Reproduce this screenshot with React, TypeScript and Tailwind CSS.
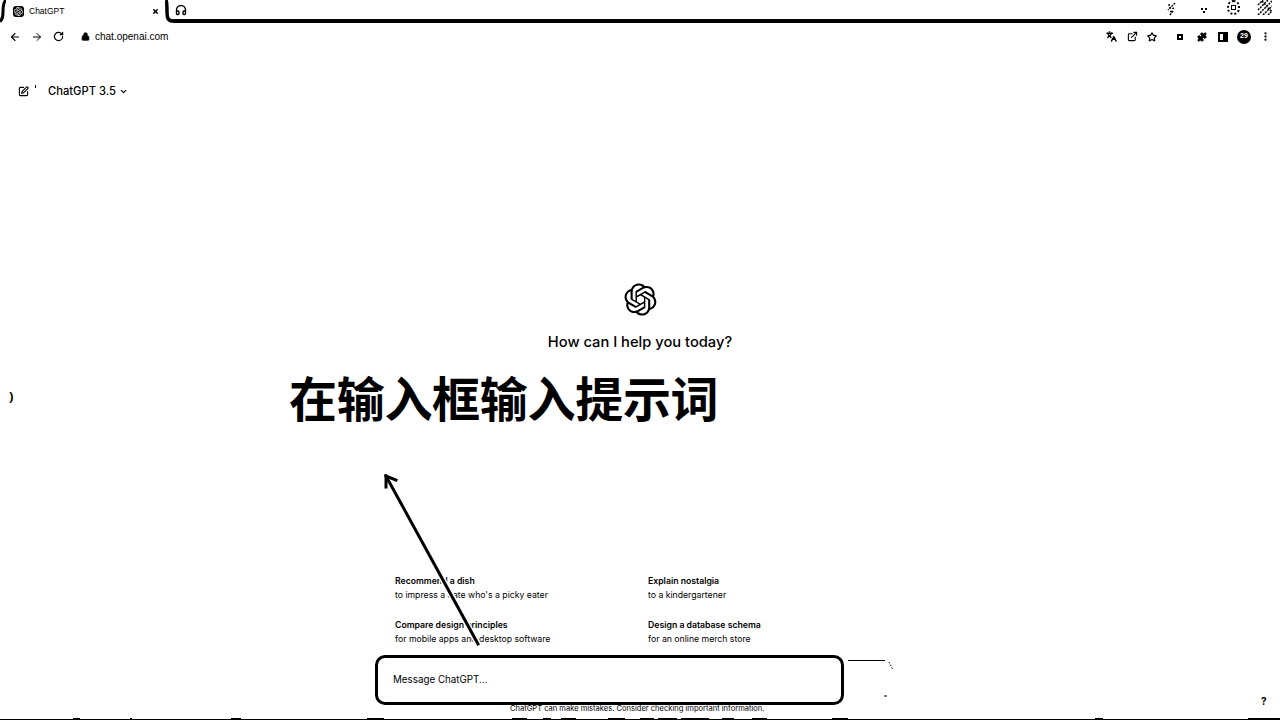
import {
  ArrowLeft,
  ArrowRight,
  ChevronDown,
  EllipsisVertical,
  ExternalLink,
  Headphones,
  Languages,
  Lock,
  Puzzle,
  RotateCw,
  SquarePen,
  Star,
  X,
} from "lucide-react";

const logoPath =
  "M37.5324 16.8707C37.9808 15.5241 38.1363 14.0974 37.9886 12.6859C37.8409 11.2744 37.3934 9.91076 36.676 8.68622C35.6126 6.83404 33.9882 5.3676 32.0373 4.4985C30.0864 3.62941 27.9098 3.40259 25.8215 3.85078C24.8796 2.7893 23.7219 1.94125 22.4257 1.36341C21.1295 0.785575 19.7249 0.491269 18.3058 0.500197C16.1708 0.495044 14.0893 1.16803 12.3614 2.42214C10.6335 3.67624 9.34853 5.44666 8.6917 7.47815C7.30085 7.76286 5.98686 8.3414 4.8377 9.17505C3.68854 10.0087 2.73073 11.0782 2.02839 12.312C0.956464 14.1591 0.498905 16.2988 0.721698 18.4228C0.944492 20.5467 1.83612 22.5449 3.268 24.1293C2.81966 25.4759 2.66413 26.9026 2.81182 28.3141C2.95951 29.7256 3.40701 31.0892 4.12437 32.3138C5.18791 34.1659 6.8123 35.6322 8.76321 36.5013C10.7141 37.3704 12.8907 37.5973 14.9789 37.1492C15.9208 38.2107 17.0786 39.0587 18.3747 39.6366C19.6709 40.2144 21.0755 40.5087 22.4946 40.4998C24.6307 40.5054 26.7133 39.8321 28.4418 38.5772C30.1704 37.3223 31.4556 35.5506 32.1119 33.5179C33.5027 33.2332 34.8167 32.6547 35.9659 31.821C37.115 30.9874 38.0728 29.9178 38.7752 28.684C39.8458 26.8371 40.3023 24.6979 40.0789 22.5748C39.8556 20.4517 38.9639 18.4544 37.5324 16.8707ZM22.4978 37.8849C20.7443 37.8874 19.0459 37.2733 17.6994 36.1501C17.7601 36.117 17.8666 36.0586 17.936 36.0161L25.9004 31.4156C26.1003 31.3019 26.2663 31.137 26.3813 30.9378C26.4964 30.7386 26.5563 30.5124 26.5549 30.2825V19.0542L29.9213 20.998C29.9389 21.0068 29.9541 21.0198 29.9656 21.0359C29.977 21.052 29.9842 21.0707 29.9867 21.0902V30.3889C29.9842 32.375 29.1946 34.2791 27.7909 35.6841C26.3872 37.0892 24.4838 37.8806 22.4978 37.8849ZM6.39227 30.9703C5.51397 29.4538 5.19742 27.6755 5.49804 25.9489C5.55718 25.9844 5.66048 26.0474 5.73461 26.0901L13.699 30.6906C13.8975 30.8068 14.1233 30.8681 14.3532 30.8681C14.583 30.8681 14.8088 30.8068 15.0073 30.6906L24.731 25.0754V28.9631C24.7321 28.9831 24.7283 29.0029 24.7199 29.0211C24.7115 29.0392 24.6988 29.055 24.6829 29.0671L16.6317 33.7156C14.9096 34.7076 12.8643 34.9756 10.9447 34.4609C9.02506 33.9461 7.38785 32.6905 6.39227 30.9703ZM4.29707 13.6194C5.17156 12.0998 6.55279 10.9364 8.19885 10.3327C8.19885 10.4013 8.19491 10.5228 8.19491 10.6071V19.808C8.19351 20.0378 8.25334 20.2638 8.36823 20.4629C8.48312 20.6619 8.64893 20.8267 8.84863 20.9404L18.5723 26.5542L15.206 28.4979C15.1894 28.5089 15.1703 28.5155 15.1505 28.5173C15.1307 28.5191 15.1107 28.516 15.0924 28.5082L7.04046 23.8557C5.32135 22.8601 4.06716 21.2235 3.55289 19.3046C3.03862 17.3858 3.30624 15.3413 4.29707 13.6194ZM31.955 20.0556L22.2312 14.4411L25.5976 12.4981C25.6142 12.4872 25.6333 12.4805 25.6531 12.4787C25.6729 12.4769 25.6928 12.4801 25.7111 12.4879L33.7631 17.1364C34.9967 17.849 36.0017 18.8982 36.6606 20.1613C37.3194 21.4244 37.6047 22.849 37.4832 24.2684C37.3617 25.6878 36.8382 27.0432 35.9743 28.1759C35.1103 29.3086 33.9415 30.1717 32.6047 30.6641C32.6047 30.5947 32.6047 30.4733 32.6047 30.3889V21.188C32.6066 20.9586 32.5474 20.7328 32.4332 20.5338C32.319 20.3348 32.154 20.1698 31.955 20.0556ZM35.3055 15.0128C35.2464 14.9765 35.1431 14.9142 35.069 14.8717L27.1045 10.2712C26.906 10.1554 26.6803 10.0943 26.4504 10.0943C26.2206 10.0943 25.9948 10.1554 25.7963 10.2712L16.0726 15.8858V11.9982C16.0715 11.9783 16.0753 11.9585 16.0837 11.9403C16.0921 11.9221 16.1048 11.9063 16.1207 11.8943L24.1719 7.25025C25.4053 6.53903 26.8158 6.19376 28.2383 6.25482C29.6608 6.31589 31.0364 6.78077 32.2044 7.59508C33.3723 8.40939 34.2842 9.53945 34.8334 10.8531C35.3826 12.1667 35.5464 13.6095 35.3055 15.0128ZM14.2424 21.9419L10.8752 19.9981C10.8576 19.9893 10.8423 19.9763 10.8309 19.9602C10.8195 19.9441 10.8122 19.9254 10.8098 19.9058V10.6071C10.8107 9.18295 11.2173 7.78848 11.9819 6.58696C12.7466 5.38544 13.8377 4.42659 15.1275 3.82264C16.4173 3.21869 17.8524 2.99464 19.2649 3.1767C20.6775 3.35876 22.0089 3.93941 23.1034 4.85067C23.0427 4.88379 22.937 4.94215 22.8668 4.98473L14.9024 9.58517C14.7025 9.69878 14.5366 9.86356 14.4215 10.0626C14.3065 10.2616 14.2466 10.4877 14.2479 10.7175L14.2424 21.9419ZM16.071 17.9991L20.4018 15.4978L24.7325 17.9975V22.9985L20.4018 25.4983L16.071 22.9985V17.9991Z";

function OpenAILogo({ className }: { className: string }) {
  return (
    <svg viewBox="0 0 41 41" className={className} fill="currentColor">
      <path d={logoPath} />
    </svg>
  );
}

// the small extension icons in the tab strip are noisy blobs in the picture
function TabStripIcons() {
  return (
    <div className="flex flex-1 justify-end pr-[8px]">
      <svg viewBox="0 0 9 14" className="mr-[25px] mt-[-1px] h-[14px] w-[9px]" fill="none" stroke="black" strokeWidth="1.4" strokeDasharray="2 1">
        <path d="M8 1 L1 8 M2 2 C2 6 4 7 8 6 M3 13 L6 9 L2 10" />
      </svg>
      <svg viewBox="0 0 6 5" className="mr-[20px] mt-[5px] h-[5px] w-[6px]" fill="black">
        <rect x="0" y="0" width="2" height="2" />
        <rect x="4" y="0" width="2" height="2" />
        <rect x="2" y="3" width="2" height="2" />
      </svg>
      <div className="mr-[17px] mt-[-3px] flex h-[15px] w-[13px] items-center justify-center rounded-full border-2 border-dotted border-black">
        <div className="h-[5px] w-[5px] border border-black" />
      </div>
      <svg viewBox="0 0 15 15" className="mt-[-3px] h-[15px] w-[15px]" fill="none" stroke="black" strokeWidth="1.5" strokeDasharray="2 1">
        <path d="M1 5 L6 0 M1 10 L11 0 M1 15 L15 1 M6 15 L15 6 M11 15 L15 11 M5 1 L15 12" />
      </svg>
    </div>
  );
}

function TabBar() {
  return (
    <div className="flex h-[23px] shrink-0 items-stretch">
      <svg viewBox="0 0 6 23" className="h-[23px] w-[6px] shrink-0" fill="none" stroke="black" strokeWidth="3">
        <path d="M6 0 C3.5 2 3 6 3 12 C3 17 2 20 0 21.5" />
      </svg>
      <div className="flex w-[159px] items-center pl-[7px] pr-[6px]">
        <div className="flex h-[11px] w-[11px] items-center justify-center rounded-[3px] bg-black">
          <OpenAILogo className="h-[9px] w-[9px] text-white" />
        </div>
        <span className="ml-[5px] flex-1 font-['Liberation_Sans',sans-serif] text-[8.5px] text-black">ChatGPT</span>
        <X className="h-[7px] w-[7px] text-black" strokeWidth={5} />
      </div>
      <svg viewBox="0 0 8 23" className="h-[23px] w-[8px] shrink-0" fill="none" stroke="black" strokeWidth="3.5">
        <path d="M1 0 C2 2 2 6 2 12 C2 18 3 21 8 21" />
      </svg>
      <div className="flex flex-1 items-start border-b-4 border-black pt-[3px]">
        <Headphones className="ml-[2px] h-[14px] w-[12px] text-black" strokeWidth={2.8} />
        <TabStripIcons />
      </div>
    </div>
  );
}

function Toolbar() {
  return (
    <div className="flex h-[27px] shrink-0 items-center pl-[9px] pr-[9px]">
      <ArrowLeft className="h-[12px] w-[12px]" strokeWidth={2.2} />
      <ArrowRight className="ml-[10px] h-[12px] w-[12px]" strokeWidth={2} />
      <RotateCw className="ml-[10px] h-[11px] w-[11px]" strokeWidth={2.6} />
      <Lock className="ml-[17px] h-[9px] w-[9px] fill-black" strokeWidth={2} />
      <span className="ml-[5px] font-['Liberation_Sans',sans-serif] text-[10px] font-normal text-black">chat.openai.com</span>
      <div className="ml-auto flex items-center">
        <Languages className="h-[11px] w-[11px]" strokeWidth={3} />
        <ExternalLink className="ml-[10px] h-[11px] w-[11px]" strokeWidth={2.4} />
        <Star className="ml-[9px] h-[10px] w-[10px]" strokeWidth={3} />
        <div className="ml-[20px] h-[6px] w-[6px] border-2 border-black" />
        <Puzzle className="ml-[14px] h-[10px] w-[10px] fill-black" strokeWidth={2} />
        <div className="ml-[11px] flex h-[10px] w-[10px] justify-end border-2 border-black">
          <div className="h-full w-[3px] bg-black" />
        </div>
        <div className="ml-[9px] flex h-[14px] w-[14px] items-center justify-center rounded-full bg-black font-['Liberation_Sans',sans-serif] text-[7px] font-bold text-white">
          29
        </div>
        <EllipsisVertical className="ml-[9px] h-[11px] w-[11px]" strokeWidth={3} />
      </div>
    </div>
  );
}

const suggestions = [
  { title: "Recommend a dish", sub: "to impress a date who's a picky eater" },
  { title: "Explain nostalgia", sub: "to a kindergartener" },
  { title: "Compare design principles", sub: "for mobile apps and desktop software" },
  { title: "Design a database schema", sub: "for an online merch store" },
];

// leftovers of the page below the fold: [left, width]
const bottomBits = [
  [73, 7], [130, 2], [231, 10], [367, 17], [512, 15], [543, 8], [561, 15], [608, 17],
  [640, 14], [658, 19], [681, 28], [722, 12], [752, 15], [832, 16], [1095, 8], [1248, 32],
];

function Annotation() {
  return (
    <>
      <div className="absolute left-[289px] top-[365px] whitespace-nowrap font-['Noto_Sans_CJK_SC',sans-serif] text-[48px] font-bold leading-[62px] tracking-[-0.3px] text-black">
        在输入框输入提示词
      </div>
      <svg className="absolute left-[370px] top-[465px] h-[190px] w-[120px]" viewBox="0 0 120 190" fill="none" strokeLinecap="square">
        <path d="M108 179 L16 11" stroke="white" strokeWidth="6" />
        <path d="M108 179 L16 11" stroke="black" strokeWidth="3" />
        <path d="M16 22 L16 11 L26 15" stroke="black" strokeWidth="3" />
      </svg>
    </>
  );
}

export default function App() {
  return (
    <div className="relative flex h-[720px] w-[1280px] flex-col overflow-hidden bg-white text-black">
      <TabBar />
      <Toolbar />

      <main className="flex min-h-0 flex-1 flex-col font-['Inter',sans-serif]">
        <header className="mt-[32px] flex h-[18px] shrink-0 items-center pl-[18px]">
          <SquarePen className="h-[11px] w-[11px]" strokeWidth={2.4} />
          <div className="ml-[6px] mb-[10px] h-[3px] w-px bg-black" />
          <span className="ml-[12px] text-[11.2px] font-medium">ChatGPT 3.5</span>
          <ChevronDown className="ml-[3px] h-[9px] w-[9px]" strokeWidth={3} />
        </header>

        <div className="mt-[183px] flex shrink-0 flex-col items-center">
          <OpenAILogo className="h-[33px] w-[33px]" />
          <h1 className="mt-[15px] text-[14.7px] font-medium leading-[22px]">How can I help you today?</h1>
        </div>

        <div className="relative mt-[221px] flex min-h-0 flex-1 flex-col">
          <div className="ml-[395px] grid w-[400px] shrink-0 grid-cols-[253px_1fr] gap-y-[16px]">
            {suggestions.map((s) => (
              <div key={s.title} className="flex flex-col">
                <span className="text-[8.7px] font-semibold leading-[14px]">{s.title}</span>
                <span className="text-[8.7px] leading-[14px]">{s.sub}</span>
              </div>
            ))}
          </div>

          <div className="mt-[9px] flex shrink-0 items-start">
            <div className="ml-[375px] flex h-[50px] w-[469px] items-center rounded-[10px] border-[3px] border-black pl-[15px] text-[9.8px]">
              Message ChatGPT...
            </div>
            <svg viewBox="0 0 46 42" className="ml-[4px] mt-[4px] h-[42px] w-[46px]" fill="none" stroke="black">
              <path d="M0 1.5 H37" />
              <path d="M41 3 L45 11" strokeDasharray="1.5 1.5" />
              <path d="M36 37 H39" />
            </svg>
          </div>

          <p className="-mt-[1px] ml-[510px] whitespace-nowrap text-[7.55px] leading-[10px]">
            ChatGPT can make mistakes. Consider checking important information.
          </p>
        </div>
      </main>

      {bottomBits.map(([x, w]) => (
        <div key={x} className="absolute bottom-0 h-[2px] bg-black" style={{ left: x, width: w }} />
      ))}
      <div className="absolute inset-x-0 bottom-0 h-px bg-black" />
      <span className="absolute left-[9px] top-[389px] text-[13px] font-bold leading-[14px]">)</span>
      <span className="absolute left-[1261px] top-[695px] font-['Inter',sans-serif] text-[10px] font-bold leading-[12px]">?</span>
      <Annotation />
    </div>
  );
}
